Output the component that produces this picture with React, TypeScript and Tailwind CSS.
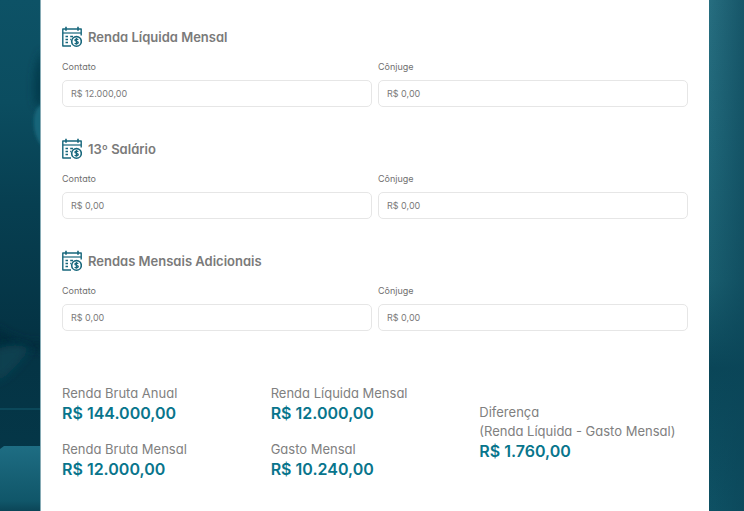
import { useState } from "react";

interface IncomeSectionProps {
  id: string;
  title: string;
  contact: string;
  spouse: string;
}

interface MoneyFieldProps {
  id: string;
  label: string;
  initialValue: string;
}

interface TotalProps {
  label: string;
  detail?: string;
  value: string;
}

const sections: IncomeSectionProps[] = [
  { id: "renda-liquida", title: "Renda Líquida Mensal", contact: "R$ 12.000,00", spouse: "R$ 0,00" },
  { id: "decimo-terceiro", title: "13º Salário", contact: "R$ 0,00", spouse: "R$ 0,00" },
  { id: "rendas-adicionais", title: "Rendas Mensais Adicionais", contact: "R$ 0,00", spouse: "R$ 0,00" },
];

const CalendarMoneyIcon = () => (
  <svg viewBox="0 0 20 21" className="h-[21px] w-5 shrink-0" fill="none" stroke="#17677c" aria-hidden="true">
    <path d="M9 20H.8V3H19.200V9.500" strokeWidth="1.400" strokeLinejoin="round" />
    <path d="M.8 7H19.200" strokeWidth="1.200" />
    <path d="M4 .8V4.700M16 .8V4.700" strokeWidth="1.600" />
    <path d="M3.500 10.500H6M3.500 13.500H6M3.500 16.500H6M8.200 10.500H11M8.200 13.500H9" strokeWidth="1.300" />
    <circle cx="14.500" cy="15.400" r="4.800" strokeWidth="1.600" />
    <path d="M16.300 13.700C15.600 12.800 12.900 12.800 12.900 14.300C12.900 15.800 16.300 15.100 16.300 16.600C16.300 18.100 13.400 18 12.700 17.100M14.500 12V18.800" strokeWidth="1.300" />
  </svg>
);

const MoneyField = ({ id, label, initialValue }: MoneyFieldProps) => {
  const [value, setValue] = useState(initialValue);

  return (
    <div className="min-w-0 flex-1">
      <label htmlFor={id} className="block text-[9px] leading-[15px] text-[#6f6f6f]">
        {label}
      </label>
      <input
        id={id}
        type="text"
        value={value}
        onChange={(e) => setValue(e.target.value)}
        className="mt-1.5 block h-[27px] w-full rounded-[5px] border border-[#e6e6e6] bg-white px-2 text-[9px] text-[#7a7a7a] outline-none focus:border-[#0b7a91]"
      />
    </div>
  );
};

const IncomeSection = ({ id, title, contact, spouse }: IncomeSectionProps) => (
  <section>
    <div className="flex h-[22px] items-start gap-1.5">
      <CalendarMoneyIcon />
      <h2 className="text-[13px] font-semibold leading-[22px] text-[#7a7a7a]">{title}</h2>
    </div>
    <div className="mt-[11px] flex gap-1.5">
      <MoneyField id={`${id}-contato`} label="Contato" initialValue={contact} />
      <MoneyField id={`${id}-conjuge`} label="Cônjuge" initialValue={spouse} />
    </div>
  </section>
);

const Total = ({ label, detail, value }: TotalProps) => (
  <div>
    <dt className="text-[13px] leading-[19px] text-[#808080]">
      {label}
      {detail && <span className="block whitespace-nowrap">{detail}</span>}
    </dt>
    <dd className="text-[16px] font-semibold leading-[21px] text-[#08758c]">{value}</dd>
  </div>
);

const LeftBackdrop = () => (
  <svg viewBox="0 0 40 511" preserveAspectRatio="none" className="absolute inset-0 h-full w-full" aria-hidden="true">
    <defs>
      <linearGradient id="left-base" x1="0" y1="0" x2="0" y2="1">
        <stop offset="0" stopColor="#0d5266" />
        <stop offset="0.2" stopColor="#0b4d60" />
        <stop offset="0.4" stopColor="#073f51" />
        <stop offset="0.65" stopColor="#043344" />
        <stop offset="1" stopColor="#053849" />
      </linearGradient>
      <linearGradient id="left-table" x1="0" y1="0" x2="0" y2="1">
        <stop offset="0" stopColor="#1e6d83" />
        <stop offset="0.85" stopColor="#105669" />
        <stop offset="1" stopColor="#0b4557" />
      </linearGradient>
      <filter id="left-soft" x="-100%" y="-50%" width="300%" height="200%">
        <feGaussianBlur stdDeviation="4" />
      </filter>
      <filter id="left-edge" x="-100%" y="-50%" width="300%" height="200%">
        <feGaussianBlur stdDeviation="1.500" />
      </filter>
    </defs>
    <rect width="40" height="511" fill="url(#left-base)" />
    <path d="M44 50C34 60 33 90 36 105H44Z" fill="#053848" filter="url(#left-soft)" />
    <path d="M42 105C31 108 31 134 42 146Z" fill="#176579" filter="url(#left-edge)" />
    <path d="M-5 326Q20 345 45 342V352Q20 343 -5 352Z" fill="#022b3b" filter="url(#left-soft)" />
    <path d="M-5 350C10 342 26 345 30 350C20 360 12 375 -5 382Z" fill="#083f50" filter="url(#left-soft)" />
    <path d="M0 409H40" stroke="#0b485a" strokeWidth="2" />
    <path d="M0 449L4 446H40V511H0Z" fill="url(#left-table)" />
  </svg>
);

const RightBackdrop = () => (
  <svg viewBox="0 0 35 511" preserveAspectRatio="none" className="absolute inset-0 h-full w-full" aria-hidden="true">
    <defs>
      <linearGradient id="right-base" x1="0" y1="0" x2="0" y2="1">
        <stop offset="0" stopColor="#276e80" />
        <stop offset="0.3" stopColor="#1f6678" />
        <stop offset="0.55" stopColor="#195d6e" />
        <stop offset="0.72" stopColor="#0a4658" />
        <stop offset="1" stopColor="#0e5164" />
      </linearGradient>
      <linearGradient id="right-shade" x1="0" y1="0" x2="1" y2="0">
        <stop offset="0" stopColor="#0b4558" stopOpacity="0" />
        <stop offset="1" stopColor="#0b4558" stopOpacity="0.600" />
      </linearGradient>
    </defs>
    <rect width="35" height="511" fill="url(#right-base)" />
    <rect width="35" height="511" fill="url(#right-shade)" />
  </svg>
);

export default function App() {
  return (
    <div className="flex min-h-screen font-['Inter','Lato',sans-serif] [font-feature-settings:'cv11']">
      <div className="relative w-10 shrink-0">
        <LeftBackdrop />
      </div>
      <main className="min-w-0 flex-1 border-l border-[#86abb5] bg-white px-[21px] pb-7 pt-[26px]">
        <div className="flex flex-col gap-[31px]">
          {sections.map((section) => (
            <IncomeSection key={section.id} {...section} />
          ))}
        </div>
        <div className="mt-[53px] grid grid-cols-3 items-center">
          <dl className="flex flex-col gap-4">
            <Total label="Renda Bruta Anual" value="R$ 144.000,00" />
            <Total label="Renda Bruta Mensal" value="R$ 12.000,00" />
          </dl>
          <dl className="flex flex-col gap-4">
            <Total label="Renda Líquida Mensal" value="R$ 12.000,00" />
            <Total label="Gasto Mensal" value="R$ 10.240,00" />
          </dl>
          <dl>
            <Total label="Diferença" detail="(Renda Líquida - Gasto Mensal)" value="R$ 1.760,00" />
          </dl>
        </div>
      </main>
      <div className="relative w-[35px] shrink-0">
        <RightBackdrop />
      </div>
    </div>
  );
}
